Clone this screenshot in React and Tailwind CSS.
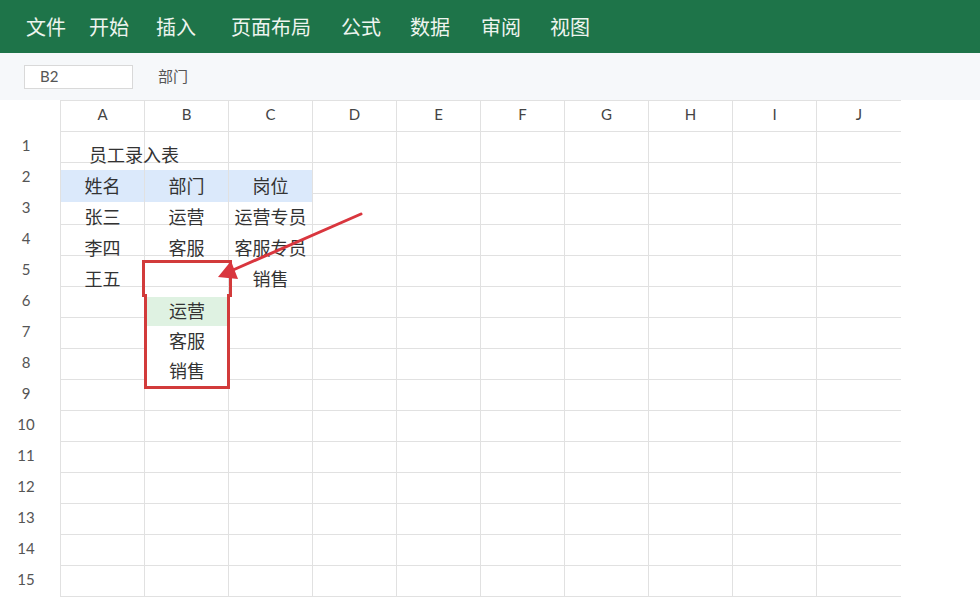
import React from "react";

const menus = [
    { label: "文件", ml: "ml-[26px]" },
    { label: "开始", ml: "ml-[23px]" },
    { label: "插入", ml: "ml-[27px]" },
    { label: "页面布局", ml: "ml-[35px]" },
    { label: "公式", ml: "ml-[30px]" },
    { label: "数据", ml: "ml-[29px]" },
    { label: "审阅", ml: "ml-[31px]" },
    { label: "视图", ml: "ml-[29px]" },
];

const cols = ["A", "B", "C", "D", "E", "F", "G", "H", "I", "J"];

// sheet content, row -> [A, B, C]
const data = {
    1: ["员工录入表", "", ""],
    2: ["姓名", "部门", "岗位"],
    3: ["张三", "运营", "运营专员"],
    4: ["李四", "客服", "客服专员"],
    5: ["王五", "", "销售"],
};

const font = { fontFamily: '"Lato", "Noto Sans CJK SC", sans-serif' };

function Cell({ row, col }) {
    const text = data[row] ? data[row][col] : "";
    const blue = row === 2 && col < 3;
    const last = col === cols.length - 1;

    return (
        <div
            className={
                "w-[84px] h-[31px] border-b border-[#e1e1e1] shrink-0 " +
                (last ? "" : "border-r")
            }
        >
            {(text || blue) && (
                <div
                    className={
                        "relative top-[7px] h-[32px] flex items-center text-[18px] text-[#333] whitespace-nowrap " +
                        (row === 1 ? "pl-[28px] justify-start " : "justify-center ") +
                        (blue ? "bg-[#dbe9fb]" : "")
                    }
                >
                    {text}
                </div>
            )}
        </div>
    );
}

export default function App() {
    const rows = Array.from({ length: 15 }, (_, i) => i + 1);

    return (
        <div className="relative w-[980px] h-[610px] overflow-hidden bg-white" style={font}>
            {/* ribbon tabs */}
            <div className="h-[53px] bg-[#1e7449] flex items-center">
                {menus.map((m) => (
                    <span key={m.label} className={m.ml + " text-[20px] text-[#eef4ef] leading-none"}>
                        {m.label}
                    </span>
                ))}
            </div>

            {/* formula bar */}
            <div className="h-[47px] bg-[#f6f8fa] flex items-center">
                <div className="ml-[24px] w-[109px] h-[24px] bg-white border border-[#d9d9d9] flex items-center pl-[15px] text-[15px] text-[#555]">
                    B2
                </div>
                <span className="ml-[25px] text-[15px] text-[#555]">部门</span>
            </div>

            {/* sheet */}
            <div className="flex">
                <div className="w-[60px] shrink-0">
                    <div className="h-[32px]" />
                    {rows.map((r) => (
                        <div key={r} className="h-[31px] flex items-center justify-center pr-[8px] pb-[4px] text-[15px] text-[#555]">
                            {r}
                        </div>
                    ))}
                </div>
                <div className="border-l border-[#e1e1e1]">
                    <div className="flex h-[32px] border-t border-[#e1e1e1]">
                        {cols.map((c, i) => (
                            <div
                                key={c}
                                className={
                                    "w-[84px] shrink-0 border-b border-[#e1e1e1] flex items-center justify-center pb-[3px] text-[15px] text-[#444] " +
                                    (i === cols.length - 1 ? "" : "border-r")
                                }
                            >
                                {c}
                            </div>
                        ))}
                    </div>
                    {rows.map((r) => (
                        <div key={r} className="flex">
                            {cols.map((c, i) => (
                                <Cell key={c} row={r} col={i} />
                            ))}
                        </div>
                    ))}
                </div>
            </div>

            {/* highlighted cell B5 */}
            <div className="absolute left-[142px] top-[260px] w-[90px] h-[37px] border-[3px] border-[#d23b3b]" />

            {/* dropdown list */}
            <div className="absolute left-[144px] top-[294px] w-[86px] border-[3px] border-t-0 border-[#d23b3b] bg-white pt-[3px] text-[18px] text-[#333]">
                <div className="h-[29px] bg-[#dff2e2] flex items-center justify-center">运营</div>
                <div className="h-[30px] flex items-center justify-center">客服</div>
                <div className="h-[30px] flex items-center justify-center">销售</div>
            </div>

            {/* arrow */}
            <svg className="absolute left-0 top-0" width="980" height="610" viewBox="0 0 980 610">
                <line x1="361" y1="214" x2="233" y2="270" stroke="#d9363e" strokeWidth="3" strokeLinecap="round" />
                <polygon points="218,277 231,261 238,279" fill="#d9363e" />
            </svg>
        </div>
    );
}
